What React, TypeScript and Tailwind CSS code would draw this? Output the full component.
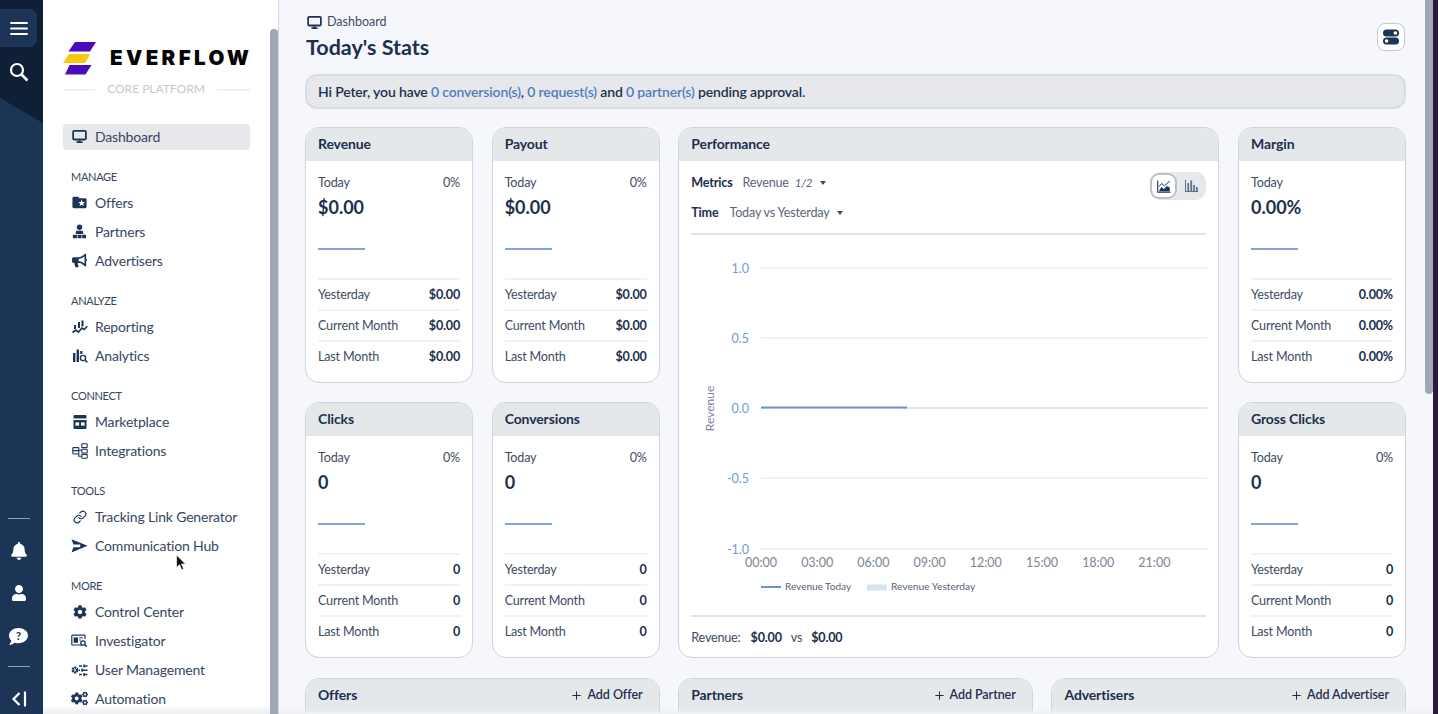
import React from "react";
import { FaBell, FaBullhorn, FaCog, FaCogs, FaUser } from "react-icons/fa";
import { MdFolderSpecial } from "react-icons/md";
import { Link as LinkIcon, Plus } from "lucide-react";

const ink = "#1c3557";

const Monitor = ({ size = 16 }: { size?: number }) => (
  <svg width={size} height={size} viewBox="0 0 16 16" fill="none">
    <rect x="1.2" y="2" width="13.6" height="9.2" rx="1" stroke={ink} strokeWidth="1.9" />
    <path d="M8 11.5v2.2M4.8 14h6.4" stroke={ink} strokeWidth="1.7" />
  </svg>
);
const Partners = () => (
  <svg width="15" height="15" viewBox="0 0 16 16" fill={ink}>
    <circle cx="8" cy="3.4" r="2.9" />
    <path d="M4.6 7.2h6.8l.8 3.4H3.8z" />
    <rect x="1" y="11.4" width="4.2" height="3.8" rx=".6" />
    <rect x="5.9" y="11.4" width="4.2" height="3.8" rx=".6" />
    <rect x="10.8" y="11.4" width="4.2" height="3.8" rx=".6" />
  </svg>
);
const Reporting = () => (
  <svg width="16" height="16" viewBox="0 0 16 16" fill={ink}>
    <rect x="2" y="6" width="2" height="4" />
    <rect x="6" y="3" width="2" height="6" />
    <rect x="9.5" y="1.5" width="2" height="6" />
    <path d="M.5 13.5l3.4-2.4 2.6 2 3.4-4 2.2 1.4 3.2-3.2" fill="none" stroke={ink} strokeWidth="1.6" />
  </svg>
);
const Analytics = () => (
  <svg width="16" height="16" viewBox="0 0 16 16" fill={ink}>
    <rect x="1" y="5" width="2.4" height="9" />
    <rect x="4.6" y="1.5" width="2.4" height="12.5" />
    <rect x="8.2" y="3" width="2.2" height="3" />
    <circle cx="11" cy="10" r="2.6" fill="none" stroke={ink} strokeWidth="1.4" />
    <path d="M13 12l2.4 2.4" stroke={ink} strokeWidth="1.5" />
  </svg>
);
const Store = () => (
  <svg width="16" height="16" viewBox="0 0 16 16" fill={ink}>
    <path d="M2.5 1h11a1 1 0 0 1 1 1v2.6h-13V2a1 1 0 0 1 1-1z" />
    <path d="M1.5 6h13v8a1 1 0 0 1-1 1h-11a1 1 0 0 1-1-1z" />
    <rect x="3.5" y="8.4" width="3.6" height="3.2" fill="#fff" />
    <rect x="9" y="8.4" width="3.6" height="3.2" fill="#fff" />
    <path d="M1.5 5.3h13" stroke="#fff" strokeWidth=".8" strokeDasharray="1.4 1.2" />
  </svg>
);
const Integrations = () => (
  <svg width="16" height="16" viewBox="0 0 16 16" fill="none" stroke={ink} strokeWidth="1.1">
    <rect x=".8" y="4.6" width="6" height="6.4" rx=".8" />
    <rect x="9.8" y=".8" width="5.4" height="3.8" rx=".6" />
    <rect x="9.8" y="6.2" width="5.4" height="3.8" rx=".6" />
    <rect x="9.8" y="11.4" width="5.4" height="3.8" rx=".6" />
    <path d="M.8 7.6h6M6.8 7.2h3M6.8 11v2.2h3" />
  </svg>
);
const Send = () => (
  <svg width="17" height="16" viewBox="0 0 17 16" fill={ink}>
    <path d="M.5 1.2L16.5 7.8.5 14.6 2.4 9.2h6.8V6.6H2.4z" />
  </svg>
);
const Investigator = () => (
  <svg width="17" height="16" viewBox="0 0 17 16" fill="none">
    <path d="M11 12H1.6a.8.8 0 0 1-.8-.8V3a.8.8 0 0 1 .8-.8h11.6a.8.8 0 0 1 .8.8v3" stroke={ink} strokeWidth="1.2" />
    <rect x="2.6" y="4.4" width="4.4" height="5.4" fill={ink} />
    <path d="M8.2 4.8h3.6M8.2 7h1.6" stroke={ink} strokeWidth="1.1" />
    <circle cx="12" cy="10" r="2.2" stroke={ink} strokeWidth="1.3" />
    <path d="M13.6 11.6l2.2 2.2" stroke={ink} strokeWidth="1.4" />
  </svg>
);
const UserMgmt = () => (
  <svg width="17" height="16" viewBox="0 0 17 16" fill="none" stroke={ink}>
    <circle cx="4" cy="8" r="2.2" strokeWidth="2.6" strokeDasharray="1.7 .5" />
    <path d="M8 4h3M13 2.4v3.2M13 4h3.5M8 8.2h1M11 6.6v3.2M11 8.2h5.5M8 12.6h3M13 11v3.2M13 12.6h3.5" strokeWidth="1.5" />
  </svg>
);
const Logo = () => (
  <svg width="34" height="33" viewBox="0 0 34 33">
    <path d="M12 0h21l-6 9.5H5.5z" fill="#4a0bb8" />
    <path d="M6 12h21.5l-5.500 9H0z" fill="#f9c80e" />
    <path d="M6.5 23h22l-6 9.5H2z" fill="#4a0bb8" />
  </svg>
);
const Toggles = () => (
  <svg width="18" height="18" viewBox="0 0 18 18">
    <rect x="1" y="1.5" width="16" height="7" rx="3.5" fill={ink} />
    <circle cx="13.4" cy="5" r="1.8" fill="#fff" />
    <rect x="1" y="9.5" width="16" height="7" rx="3.5" fill={ink} />
    <circle cx="4.6" cy="13" r="1.8" fill="#fff" />
  </svg>
);
const AreaIcon = () => (
  <svg width="14" height="13" viewBox="0 0 14 13" fill="none">
    <path d="M.7.5v11.8h12.8" stroke={ink} strokeWidth="1.1" />
    <path d="M2 11l2.4-4 2.6 2 2.8-3 3 1.4V11.6H2z" fill={ink} />
    <path d="M2 6.5l2.6-3 2.8 2.4L12.8 1" stroke={ink} strokeWidth="1" />
  </svg>
);
const BarsIcon = () => (
  <svg width="13" height="12" viewBox="0 0 13 12" fill="#5d6f88">
    <rect x="0" y="0" width="1" height="12" />
    <rect x="0" y="11" width="13" height="1" />
    <rect x="2.4" y="3" width="1.7" height="8" />
    <rect x="5.4" y="0.5" width="1.7" height="10.5" />
    <rect x="8.2" y="5" width="1.7" height="6" />
    <rect x="11" y="7" width="1.7" height="4" />
  </svg>
);

type Item = { label: string; icon: React.ReactNode };
type Group = { title: string; items: Item[] };

const groups: Group[] = [
  {
    title: "MANAGE",
    items: [
      { label: "Offers", icon: <MdFolderSpecial size={17} color={ink} /> },
      { label: "Partners", icon: <Partners /> },
      { label: "Advertisers", icon: <FaBullhorn size={15} color={ink} /> },
    ],
  },
  {
    title: "ANALYZE",
    items: [
      { label: "Reporting", icon: <Reporting /> },
      { label: "Analytics", icon: <Analytics /> },
    ],
  },
  {
    title: "CONNECT",
    items: [
      { label: "Marketplace", icon: <Store /> },
      { label: "Integrations", icon: <Integrations /> },
    ],
  },
  {
    title: "TOOLS",
    items: [
      { label: "Tracking Link Generator", icon: <LinkIcon size={14} color={ink} strokeWidth={2} /> },
      { label: "Communication Hub", icon: <Send /> },
    ],
  },
  {
    title: "MORE",
    items: [
      { label: "Control Center", icon: <FaCog size={14} color={ink} /> },
      { label: "Investigator", icon: <Investigator /> },
      { label: "User Management", icon: <UserMgmt /> },
      { label: "Automation", icon: <FaCogs size={17} color={ink} /> },
    ],
  },
];

function Rail() {
  return (
    <aside className="relative flex h-[714px] w-[43px] shrink-0 flex-col bg-[#1c3557] text-white">
      <svg className="absolute left-0 top-0" width="43" height="123" viewBox="0 0 43 123">
        <path d="M0 0h43v123L0 98z" fill="#0f1f36" />
      </svg>
      <div className="relative z-10 mt-[9px] flex h-[38px] w-[37px] items-center justify-center rounded-r-lg bg-[#1c3557]">
        <svg width="18" height="13" viewBox="0 0 18 13" fill="#fff">
          <rect width="18" height="2" rx="1" />
          <rect y="5.5" width="18" height="2" rx="1" />
          <rect y="11" width="18" height="2" rx="1" />
        </svg>
      </div>
      <div className="relative z-10 mt-[15px] flex w-[37px] justify-center">
        <svg width="20" height="20" viewBox="0 0 20 20" fill="none" stroke="#fff">
          <circle cx="8" cy="8" r="6" strokeWidth="2.2" />
          <path d="M12.5 12.5l6 6" strokeWidth="2.6" />
        </svg>
      </div>
      <div className="mt-auto flex w-[37px] flex-col items-center pb-[7px]">
        <div className="h-px w-[22px] bg-[#8fa0b5]" />
        <FaBell size={18} className="mt-[23px]" />
        <FaUser size={16} className="mt-[25px]" />
        <svg width="19" height="18" viewBox="0 0 19 18" className="mt-[27px]">
          <path d="M9.5 0C4.3 0 0 3.3 0 7.6c0 1.9.9 3.6 2.3 5-.3 1.6-1.3 3-2.1 4.4 2.3-.2 4.2-1.1 5.6-2.3 1.2.4 2.4.6 3.7.6 5.2 0 9.5-3.3 9.5-7.7S14.700 0 9.500 0z" fill="#fff" />
          <text x="9.5" y="12" textAnchor="middle" fontSize="11" fontWeight="900" fill={ink} fontFamily="Lato, sans-serif">?</text>
        </svg>
        <div className="mt-[20px] h-px w-[22px] bg-[#8fa0b5]" />
        <svg width="16" height="16" viewBox="0 0 16 16" fill="none" stroke="#fff" strokeWidth="2.2" className="mt-[24px]">
          <path d="M8.5 2L2.5 8l6 6M14 0.5v15" />
        </svg>
      </div>
    </aside>
  );
}

function Sidebar() {
  return (
    <aside className="relative h-[714px] w-[236px] shrink-0 overflow-hidden border-r border-[#d3d6dc] bg-white pl-[20px] pr-[28px] font-['Lato',sans-serif]">
      <div className="flex h-[84px] items-end">
        <div className="flex items-center gap-[13px] pb-[9px]">
          <Logo />
          <span className="font-['Inter',sans-serif] text-[20.5px] font-black leading-none tracking-[3.4px] text-[#050505]">EVERFLOW</span>
        </div>
      </div>
      <div className="flex h-[10px] items-center overflow-hidden text-[12px] leading-none text-[#c5c9cf]">
        <div className="mt-[2px] h-[2px] w-[32px] bg-[#eef0f2]" />
        <span className="mx-auto">CORE PLATFORM</span>
        <div className="mt-[2px] h-[2px] w-[33px] bg-[#eef0f2]" />
      </div>
      <div className="mt-[30px] flex h-[26px] items-center rounded bg-[#e6e8eb] pb-[2px] pl-[9px] text-[14px] tracking-[-0.17px] text-[#36465f]">
        <span className="flex w-[23px] items-center pt-[1px]"><Monitor size={15} /></span>
        Dashboard
      </div>
      {groups.map((g, i) => (
        <div key={g.title} className={i === 0 ? "mt-[15.5px]" : "mt-[14px]"}>
          <div className="flex h-[23px] items-center pl-[8px] text-[11px] tracking-[-0.3px] text-[#36465f]">{g.title}</div>
          {g.items.map((it) => (
            <div key={it.label} className="flex h-[29px] items-center pb-[2px] text-[14px] tracking-[-0.17px] text-[#36465f]">
              <span className="flex w-[32px] justify-center pl-[1px] pt-[1px]">{it.icon}</span>
              {it.label}
            </div>
          ))}
        </div>
      ))}
      <div className="absolute bottom-0 left-0 right-0 h-[7px] bg-gradient-to-b from-[#f7f8f9] to-[#eef0f2]" />
      <div className="absolute bottom-0 right-0 top-[29px] w-[8px] rounded-t-md bg-[#9ea8b6]" />
    </aside>
  );
}

const cardTitle = "flex h-[33px] items-center bg-[#e5e8eb] pb-[2px] pl-[12px] text-[14px] font-bold tracking-[-0.12px] text-[#1c2f4d]";

function StatCard({ title, value, pct = true, rows }: { title: string; value: string; pct?: boolean; rows: string }) {
  return (
    <section className="h-[256px] overflow-hidden rounded-[14px] border border-[#d0d3d9] bg-white">
      <h2 className={cardTitle}>{title}</h2>
      <div className="px-[12px]">
        <div className="mt-[13px] flex h-[18px] items-center justify-between text-[12.6px] tracking-[-0.2px] text-[#3e4c63]">
          <span>Today</span>
          {pct && <span>0%</span>}
        </div>
        <div className="mt-[2px] h-[26px] text-[18px] font-bold leading-[26px] text-[#1c2f4d]">{value}</div>
        <div className="mt-[28px] h-[2px] w-[47px] bg-[#7fa6d8]" />
        <div className="mt-[28px]">
          {["Yesterday", "Current Month", "Last Month"].map((r) => (
            <div key={r} className="flex h-[31px] items-center justify-between border-t-2 border-[#f1f2f4] pt-[1px] text-[12.6px] tracking-[-0.2px] text-[#3e4c63]">
              <span>{r}</span>
              <span className="font-bold text-[#1c2f4d]">{rows}</span>
            </div>
          ))}
        </div>
      </div>
    </section>
  );
}

function Chart() {
  const ys = [
    { l: "1.0", y: 268 },
    { l: "0.5", y: 338 },
    { l: "0.0", y: 408 },
    { l: "-0.5", y: 478 },
    { l: "-1.0", y: 549 },
  ];
  const xs = ["00:00", "03:00", "06:00", "09:00", "12:00", "15:00", "18:00", "21:00"];
  const font = "Lato, sans-serif";
  return (
    <svg width="516" height="379" viewBox="691 236 516 379" className="mt-[1px] block">
      {ys.map((t) => (
        <g key={t.l}>
          <line x1="761" x2="1207" y1={t.y} y2={t.y} stroke={t.y === 408 ? "#e3e5e8" : "#f0f1f3"} strokeWidth="2" />
          <text x="749" y={t.y + 4.5} textAnchor="end" fontSize="12.5" fill="#6f9bd6" fontFamily={font}>{t.l}</text>
        </g>
      ))}
      <line x1="761" x2="907" y1="407.5" y2="407.5" stroke="#6a93d2" strokeWidth="2" />
      <text transform="translate(714 408.5) rotate(-90)" textAnchor="middle" fontSize="12" fill="#7a8596" fontFamily={font}>Revenue</text>
      {xs.map((t, i) => (
        <text key={t} x={761 + i * 56.2} y="567" textAnchor="middle" fontSize="12.5" fill="#7a8596" fontFamily={font}>{t}</text>
      ))}
      <line x1="761" x2="781" y1="587" y2="587" stroke="#6a93d2" strokeWidth="2" />
      <text x="785" y="590" fontSize="10" fill="#55627a" fontFamily={font}>Revenue Today</text>
      <rect x="867" y="584.5" width="20" height="6" fill="#d5e3f6" />
      <text x="891" y="590" fontSize="10.2" fill="#55627a" fontFamily={font}>Revenue Yesterday</text>
    </svg>
  );
}

function Performance() {
  return (
    <section className="row-span-2 overflow-hidden rounded-[14px] border border-[#d0d3d9] bg-white">
      <h2 className={cardTitle}>Performance</h2>
      <div className="px-[12px]">
        <div className="flex h-[74px] justify-between border-b-2 border-[#e2e3e8]">
          <div className="text-[12.6px] tracking-[-0.2px]">
            <div className="mt-[13px] flex h-[18px] items-center">
              <b className="text-[#1c2f4d]">Metrics</b>
              <span className="ml-[10px] text-[#5a667a]">Revenue</span>
              <i className="ml-[6px] text-[11.5px] text-[#5a667a]">1/2</i>
              <span className="ml-[8px] h-0 w-0 border-x-[3.5px] border-t-[4px] border-x-transparent border-t-[#3e4c63]" />
            </div>
            <div className="mt-[12px] flex h-[18px] items-center">
              <b className="text-[#1c2f4d]">Time</b>
              <span className="ml-[11px] text-[#5a667a]">Today vs Yesterday</span>
              <span className="ml-[8px] h-0 w-0 border-x-[3.5px] border-t-[4px] border-x-transparent border-t-[#3e4c63]" />
            </div>
          </div>
          <div className="mt-[11px] flex h-[28px] w-[56px] items-center rounded-[10px] bg-[#e6e8eb]">
            <span className="flex h-[26px] w-[27px] items-center justify-center rounded-[9px] border-2 border-[#bcc1c9] bg-white"><AreaIcon /></span>
            <span className="flex flex-1 items-center justify-center"><BarsIcon /></span>
          </div>
        </div>
        <Chart />
        <div className="flex h-[42px] items-center border-t-2 border-[#e2e3e8] pt-[2px] text-[12.6px] tracking-[-0.2px] text-[#3e4c63]">
          <span>Revenue:</span>
          <b className="ml-[10px] text-[#1c2f4d]">$0.00</b>
          <span className="ml-[9px]">vs</span>
          <b className="ml-[9px] text-[#1c2f4d]">$0.00</b>
        </div>
      </div>
    </section>
  );
}

function ListCard({ title, action }: { title: string; action: string }) {
  return (
    <section className="h-[60px] overflow-hidden rounded-t-[14px] border border-[#d0d3d9] bg-white">
      <div className="flex h-[33px] items-center justify-between bg-[#e5e8eb] pl-[12px] pr-[16px]">
        <h2 className="pb-[3px] text-[14px] font-bold tracking-[-0.12px] text-[#1c2f4d]">{title}</h2>
        <span className="flex items-center pb-[1px] text-[12.5px] font-semibold tracking-[-0.05px] text-[#1c2f4d]">
          <Plus size={13} strokeWidth={2} className="mr-[4px]" />
          {action}
        </span>
      </div>
    </section>
  );
}

function Main() {
  return (
    <main className="relative h-[714px] min-w-0 flex-1 overflow-hidden bg-[#f6f7fc] pl-[26px] pr-[32px] font-['Lato',sans-serif]">
      <div className="flex h-[74px] justify-between">
        <div className="pl-[1px]">
          <div className="mt-[14px] flex h-[16px] items-center pl-[1px] text-[12.5px] text-[#3e4c63]">
            <Monitor size={15} />
            <span className="ml-[5px]">Dashboard</span>
          </div>
          <h1 className="mt-[3px] text-[21.5px] font-bold leading-[28px] text-[#1c2f4d]">Today's Stats</h1>
        </div>
        <button className="mr-[1px] mt-[23px] flex h-[28px] w-[28px] items-center justify-center rounded-lg border border-[#c4c8cf] bg-white">
          <Toggles />
        </button>
      </div>
      <div className="flex h-[35px] items-center rounded-xl border-2 border-[#d9dce0] bg-[#e6e8eb] pl-[11px] text-[14px] tracking-[-0.15px] text-[#1c2f4d]">
        <span className="font-semibold">
          Hi Peter, you have <a className="text-[#4f7cc0]">0 conversion(s)</a>, <a className="text-[#4f7cc0]">0 request(s)</a> and <a className="text-[#4f7cc0]">0 partner(s)</a> pending approval.
        </span>
      </div>
      <div className="mt-[18px] grid grid-cols-[168px_168px_1fr_168px] gap-x-[18.67px] gap-y-[19px]">
        <StatCard title="Revenue" value="$0.00" rows="$0.00" />
        <StatCard title="Payout" value="$0.00" rows="$0.00" />
        <Performance />
        <StatCard title="Margin" value="0.00%" rows="0.00%" pct={false} />
        <StatCard title="Clicks" value="0" rows="0" />
        <StatCard title="Conversions" value="0" rows="0" />
        <StatCard title="Gross Clicks" value="0" rows="0" />
      </div>
      <div className="mt-[20px] grid grid-cols-3 gap-x-[18.67px]">
        <ListCard title="Offers" action="Add Offer" />
        <ListCard title="Partners" action="Add Partner" />
        <ListCard title="Advertisers" action="Add Advertiser" />
      </div>
      <div className="absolute bottom-0 left-0 right-0 h-[6px] bg-gradient-to-b from-transparent to-[#eef0f2]" />
      <div className="absolute right-[5px] top-0 h-[394px] w-[8px] rounded-b-md bg-[#9ea8b6]" />
      <div className="absolute bottom-0 right-0 top-0 w-[5px] bg-[#2b1a3c]" />
    </main>
  );
}

export default function App() {
  return (
    <div className="relative flex h-[714px] w-[1438px] overflow-hidden">
      <Rail />
      <Sidebar />
      <Main />
      <svg className="absolute left-[175px] top-[554px]" width="12" height="18" viewBox="0 0 12 18">
        <path d="M1.5 1v12.5l3-2.8 2.2 5 2-.9-2.200-4.800h4z" fill="#111" stroke="#fff" strokeWidth=".7" />
      </svg>
    </div>
  );
}
